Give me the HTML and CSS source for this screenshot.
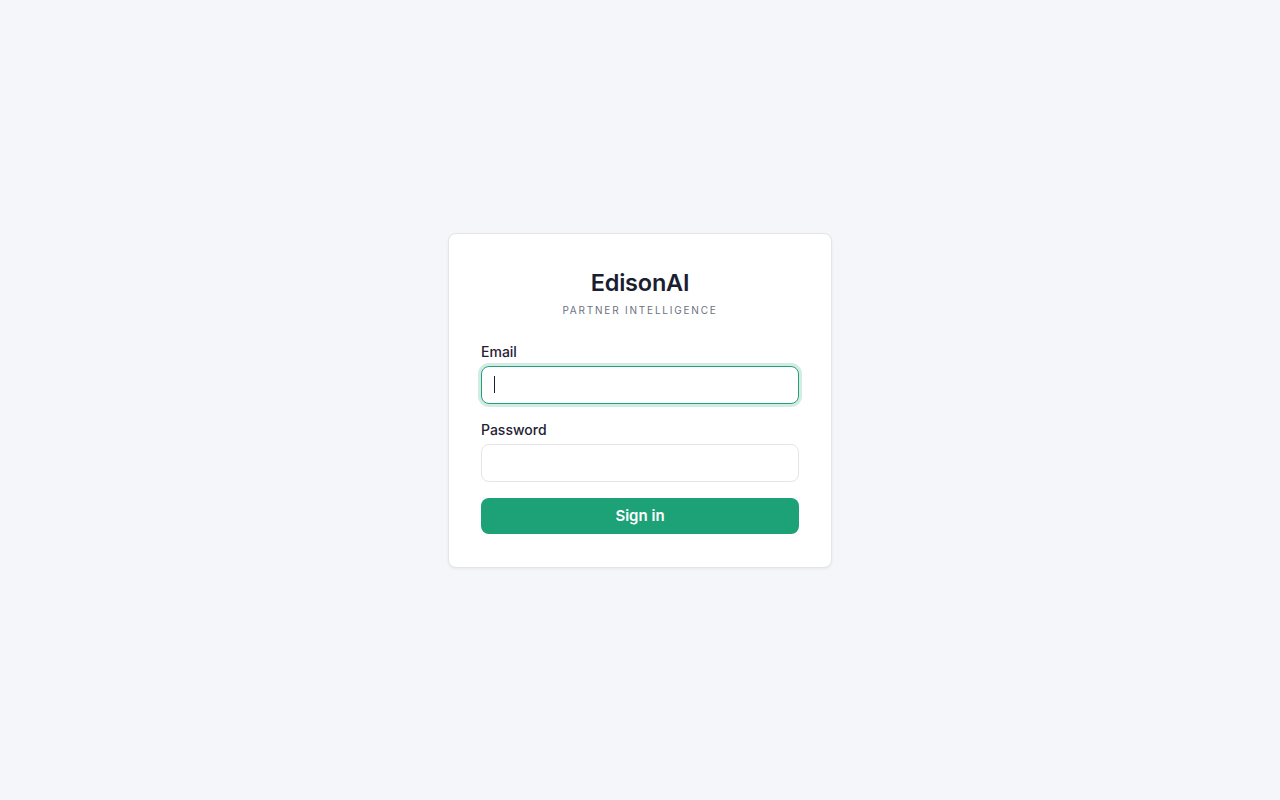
FILE: index.html
```html
<!DOCTYPE html>
<html lang="en">
<head>
<meta charset="utf-8">
<title>EdisonAI — Sign in</title>
<link rel="stylesheet" href="styles.css">
</head>
<body>
<main class="page">
  <form class="card">
    <div class="brand">
      <h1 class="brand-title">EdisonAI</h1>
      <p class="brand-sub">Partner Intelligence</p>
    </div>
    <div class="field">
      <label class="label" for="email">Email</label>
      <div class="input input-focus"><span class="caret"></span></div>
    </div>
    <div class="field">
      <label class="label" for="password">Password</label>
      <div class="input"></div>
    </div>
    <button class="btn" type="button">Sign in</button>
  </form>
</main>
</body>
</html>
```
FILE: styles.css
```css
* { box-sizing: border-box; }
html, body { margin: 0; padding: 0; }
body {
  background: #f5f6f9;
  font-family: Inter, "Noto Sans", sans-serif;
  color: #1c1f33;
}
.page {
  min-height: 800px;
  display: flex;
  align-items: center;
  justify-content: center;
}
.card {
  width: 384px;
  background: #ffffff;
  border: 1px solid #e3e5ea;
  border-radius: 8px;
  box-shadow: 0 1px 3px rgba(15, 23, 42, 0.06);
  padding: 35px 32px 33px;
  display: flex;
  flex-direction: column;
}
.brand { text-align: center; margin-bottom: 25px; }
.brand-title {
  margin: 0;
  font-size: 23.5px;
  line-height: 28px;
  font-weight: 600;
  color: #1b1e32;
  letter-spacing: -0.2px;
}
.brand-sub {
  margin: 6px 0 0;
  font-size: 10px;
  line-height: 14px;
  text-transform: uppercase;
  letter-spacing: 1.8px;
  color: #6b7280;
}
.field { display: flex; flex-direction: column; margin-bottom: 16px; }
.label {
  font-size: 14px;
  line-height: 20px;
  font-weight: 500;
  color: #1f2235;
  margin-bottom: 4px;
}
.input {
  height: 38px;
  border: 1px solid #e3e5ea;
  border-radius: 8px;
  background: #fff;
  display: flex;
  align-items: center;
  padding: 0 12px;
}
.input-focus {
  border: 1px solid #23a07b;
  box-shadow: 0 0 0 3px rgba(30, 158, 120, 0.2);
}
.caret {
  width: 1px;
  height: 17px;
  background: #1b1e32;
}
.btn {
  height: 36px;
  border: none;
  border-radius: 8px;
  background: #1da278;
  color: #ffffff;
  font-family: Inter, "Noto Sans", sans-serif;
  font-size: 15px;
  font-weight: 600;
  cursor: pointer;
}
```
